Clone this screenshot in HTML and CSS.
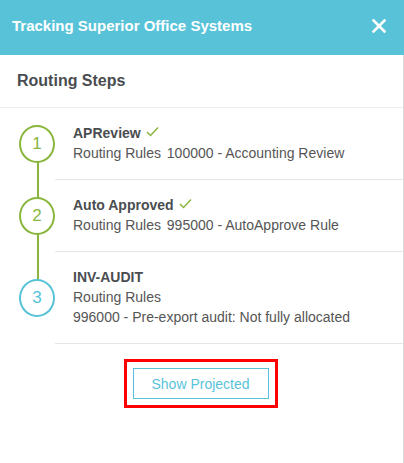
FILE: index.html
```html
<!DOCTYPE html>
<html>
<head>
<meta charset="utf-8">
<link rel="stylesheet" href="styles.css">
</head>
<body>
<div class="modal">
  <header class="header">
    <div class="header-title">Tracking Superior Office Systems</div>
    <button class="close" aria-label="Close">
      <svg width="14" height="14" viewBox="0 0 14 14"><path d="M1.5 1.5 L12.5 12.5 M12.5 1.5 L1.5 12.5" stroke="#fff" stroke-width="2.6" stroke-linecap="square"/></svg>
    </button>
  </header>
  <div class="panel">
    <div class="section-title">Routing Steps</div>
    <ol class="steps">
      <li class="step done first">
        <div class="marker"><span class="circle">1</span></div>
        <div class="content">
          <div class="step-title">APReview <svg class="check" width="13" height="11" viewBox="0 0 13 11"><path d="M1 6 L4.5 9.5 L12 1.5" fill="none" stroke="#8ab63d" stroke-width="1.5"/></svg></div>
          <div class="line">Routing Rules <span class="gap">100000 - Accounting Review</span></div>
        </div>
      </li>
      <li class="step done">
        <div class="marker"><span class="circle">2</span></div>
        <div class="content">
          <div class="step-title">Auto Approved <svg class="check" width="13" height="11" viewBox="0 0 13 11"><path d="M1 6 L4.5 9.5 L12 1.5" fill="none" stroke="#8ab63d" stroke-width="1.5"/></svg></div>
          <div class="line">Routing Rules <span class="gap">995000 - AutoApprove Rule</span></div>
        </div>
      </li>
      <li class="step current last">
        <div class="marker"><span class="circle">3</span></div>
        <div class="content">
          <div class="step-title">INV-AUDIT</div>
          <div class="line">Routing Rules</div>
          <div class="line">996000 - Pre-export audit: Not fully allocated</div>
        </div>
      </li>
    </ol>
    <div class="actions">
      <div class="highlight">
        <button class="projected">Show Projected</button>
      </div>
    </div>
  </div>
</div>
</body>
</html>
```
FILE: styles.css
```css
* { box-sizing: border-box; }
html, body { margin: 0; padding: 0; background: #fff; }
body {
  font-family: "Liberation Sans", Arial, sans-serif;
  width: 404px;
  height: 463px;
  overflow: hidden;
}
.modal { display: flex; flex-direction: column; height: 463px; }
.header {
  height: 55px;
  background: #58c3d8;
  display: flex;
  align-items: center;
  justify-content: space-between;
  padding: 0 18px 4px 12px;
  flex: none;
}
.header-title {
  color: #fff;
  font-size: 15px;
  font-weight: bold;
}
.close {
  background: none;
  border: 0;
  padding: 0;
  width: 14px;
  height: 14px;
  display: flex;
}
.panel {
  flex: 1;
  border-right: 1px solid #dcdcdc;
}
.section-title {
  height: 53px;
  border-bottom: 1px solid #eeeeee;
  padding: 17px 0 0 17px;
  font-size: 16px;
  font-weight: bold;
  color: #4a4d50;
}
.steps { list-style: none; margin: 0; padding: 0; }
.step { display: flex; }
.marker {
  width: 55px;
  flex: none;
  position: relative;
  display: flex;
  align-items: center;
  padding-left: 19px;
}
.marker::before, .marker::after {
  content: "";
  position: absolute;
  left: 37px;
  width: 2px;
  background: #8ab63d;
}
.marker::before { top: 0; height: 50%; }
.marker::after { bottom: 0; height: 50%; }
.first .marker::before { display: none; }
.last .marker::after { display: none; }
.circle {
  position: relative;
  z-index: 1;
  width: 38px;
  height: 38px;
  border-radius: 50%;
  border: 2px solid #8ab63d;
  background: #fff;
  color: #8ab63d;
  font-size: 17px;
  display: flex;
  align-items: center;
  justify-content: center;
}
.current .circle { border-color: #58c3d8; color: #58c3d8; }
.content {
  flex: 1;
  border-bottom: 1px solid #e6e6e6;
  padding: 15px 0 16px 18px;
  color: #555;
  font-size: 14px;
  line-height: 20px;
}
.step-title {
  font-weight: bold;
  color: #4a4d50;
  display: flex;
  align-items: center;
  gap: 5px;
}
.check { margin-top: -4px; }
.gap { margin-left: 2px; }
.actions {
  display: flex;
  justify-content: center;
  padding-top: 15px;
  padding-right: 2px;
}
.highlight {
  border: 3px solid #ff0000;
  padding: 6px 6px;
}
.projected {
  width: 136px;
  height: 31px;
  background: #fff;
  border: 1px solid #58c3d8;
  color: #58c3d8;
  font-family: "Liberation Sans", Arial, sans-serif;
  font-size: 14px;
  padding: 0;
}
```
